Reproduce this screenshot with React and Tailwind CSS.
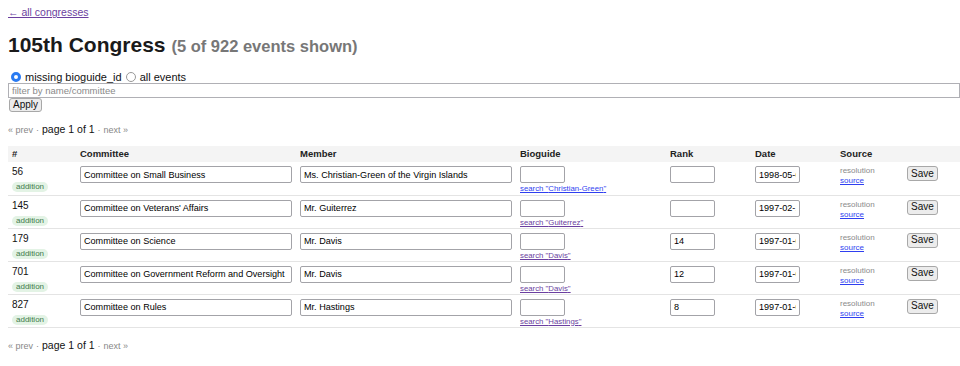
const rows = [
  { id: 56, committee: "Committee on Small Business", member: "Ms. Christian-Green of the Virgin Islands", search: "Christian-Green", rank: "", date: "1998-05-06", visited: false },
  { id: 145, committee: "Committee on Veterans' Affairs", member: "Mr. Guiterrez", search: "Guiterrez", rank: "", date: "1997-02-12", visited: true },
  { id: 179, committee: "Committee on Science", member: "Mr. Davis", search: "Davis", rank: "14", date: "1997-01-09", visited: true },
  { id: 701, committee: "Committee on Government Reform and Oversight", member: "Mr. Davis", search: "Davis", rank: "12", date: "1997-01-09", visited: true },
  { id: 827, committee: "Committee on Rules", member: "Mr. Hastings", search: "Hastings", rank: "8", date: "1997-01-09", visited: true },
];

const inputCls =
  "block h-[17px] border border-[#a3a3a8] rounded-[2px] bg-white px-[3px] text-[9.1px] text-[#000] outline-none";

function Pager() {
  return (
    <div className="flex items-baseline gap-[3px] text-[#888]">
      <span className="text-[9px]">« prev</span>
      <span className="text-[9px]">·</span>
      <span className="text-[10.5px] text-[#111]">page 1 of 1</span>
      <span className="text-[9px]">·</span>
      <span className="text-[9px]">next »</span>
    </div>
  );
}

export default function App() {
  return (
    <div className="min-h-screen bg-white pl-2 font-['Liberation_Sans',Arial,sans-serif] text-[#111]">
      <div className="pt-[4px] h-[20px] leading-[14px]">
        <a href="#" className="text-[10.5px] text-[#6b3fa0] underline">← all congresses</a>
      </div>

      <h1 className="mt-[12px] leading-[25px] font-bold text-[21px] text-[#1a1a1a]">
        105th Congress{" "}
        <span className="text-[16.5px] text-[#777]">(5 of 922 events shown)</span>
      </h1>

      <div className="mt-[11px] flex items-center h-[14px] text-[11px]">
        <span className="ml-[3px] w-[10px] h-[10px] rounded-full border-[3px] border-[#2a7bf2] bg-white"></span>
        <span className="ml-[4px]">missing bioguide_id</span>
        <span className="ml-[4px] w-[10px] h-[10px] rounded-full border border-[#999] bg-white"></span>
        <span className="ml-[4px]">all events</span>
      </div>

      <input
        readOnly
        placeholder="filter by name/committee"
        className="mt-[-1px] block w-[952px] h-[15px] border border-[#b0b0b5] bg-white px-[3px] text-[9.5px] placeholder:text-[#8a8a8a] outline-none"
      />
      <button className="mt-[0px] ml-[1px] block h-[14px] px-[3px] border border-[#a8a8a8] rounded-[3px] bg-[#ececec] text-[10px] leading-[12px]">
        Apply
      </button>

      <div className="mt-[11px] h-[12px] leading-[12px]">
        <Pager />
      </div>

      <table className="mt-[11px] w-[952px] table-fixed border-collapse text-[10px]">
        <colgroup>
          <col className="w-[68px]" />
          <col className="w-[220px]" />
          <col className="w-[220px]" />
          <col className="w-[150px]" />
          <col className="w-[85px]" />
          <col className="w-[85px]" />
          <col className="w-[67px]" />
          <col className="w-[57px]" />
        </colgroup>
        <thead>
          <tr className="bg-[#f4f4f4] h-[16px] text-left text-[9.5px] font-bold text-[#222]">
            <th className="pl-[4px] font-bold">#</th>
            <th className="pl-[4px] font-bold">Committee</th>
            <th className="pl-[4px] font-bold">Member</th>
            <th className="pl-[4px] font-bold">Bioguide</th>
            <th className="pl-[4px] font-bold">Rank</th>
            <th className="pl-[4px] font-bold">Date</th>
            <th className="pl-[4px] font-bold">Source</th>
            <th></th>
          </tr>
        </thead>
        <tbody>
          {rows.map((r) => (
            <tr key={r.id} className="h-[33px] border-b border-[#e4e4e4] align-top">
              <td className="pl-[4px] pt-[4px]">
                <div className="leading-[12px] text-[10px]">{r.id}</div>
                <span className="mt-[1px] inline-block rounded-full bg-[#e3f3e5] px-[4px] text-[8px] leading-[10px] text-[#3f7a4a]">
                  addition
                </span>
              </td>
              <td className="pl-[4px] pt-[4px]">
                <input readOnly defaultValue={r.committee} className={inputCls + " w-[212px]"} />
              </td>
              <td className="pl-[4px] pt-[4px]">
                <input readOnly defaultValue={r.member} className={inputCls + " w-[212px]"} />
              </td>
              <td className="pl-[4px] pt-[4px]">
                <input readOnly defaultValue="" className={inputCls + " w-[45px]"} />
                <a
                  href="#"
                  className={
                    "mt-[1px] block text-[7.8px] leading-[10px] underline " +
                    (r.visited ? "text-[#6b3fa0]" : "text-[#2f3ff0]")
                  }
                >
                  search "{r.search}"
                </a>
              </td>
              <td className="pl-[4px] pt-[4px]">
                <input readOnly defaultValue={r.rank} className={inputCls + " w-[45px]"} />
              </td>
              <td className="pl-[4px] pt-[4px]">
                <input readOnly defaultValue={r.date} className={inputCls + " w-[45px]"} />
              </td>
              <td className="pl-[4px] pt-[4px]">
                <div className="text-[8px] leading-[10px] text-[#8a8a8a]">resolution</div>
                <a href="#" className="block text-[8px] leading-[10px] text-[#2f3ff0] underline">source</a>
              </td>
              <td className="pl-[4px] pt-[4px]">
                <button className="block h-[15px] px-[3px] border border-[#a8a8a8] rounded-[3px] bg-[#ececec] text-[10px] leading-[12px]">
                  Save
                </button>
              </td>
            </tr>
          ))}
        </tbody>
      </table>

      <div className="mt-[11px] h-[12px] leading-[12px]">
        <Pager />
      </div>
    </div>
  );
}
